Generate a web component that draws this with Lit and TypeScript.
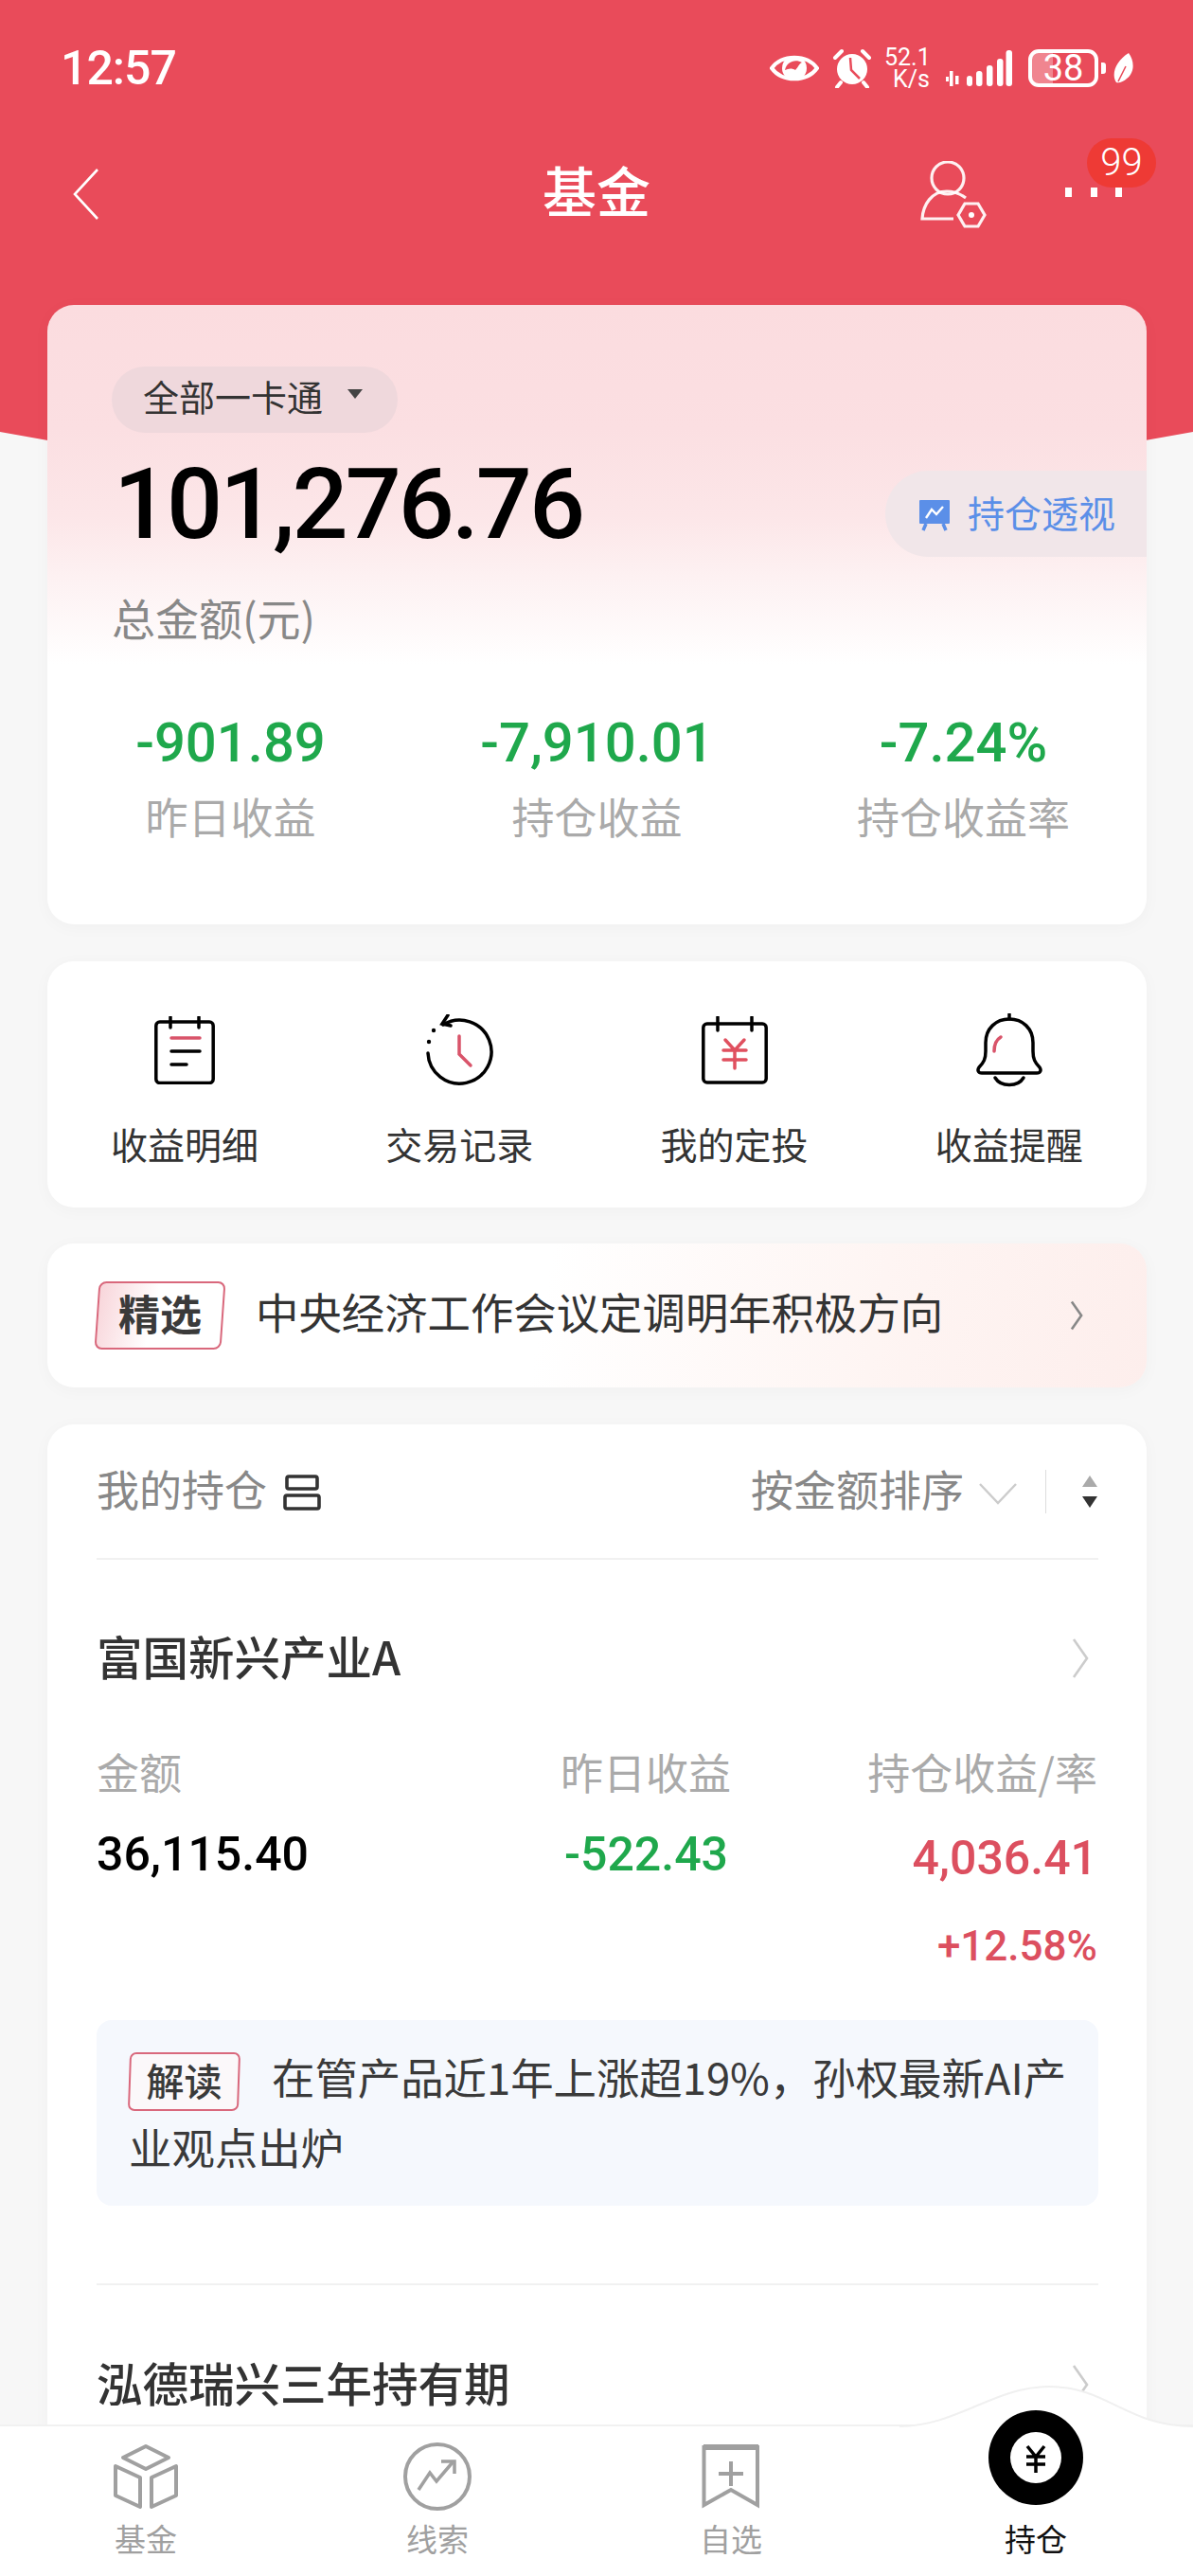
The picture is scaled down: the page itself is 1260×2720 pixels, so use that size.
import { LitElement, html, css, svg } from "lit";
import { customElement } from "lit/decorators.js";

const chevron = (cls: string) => html`<svg class=${cls} viewBox="0 0 20 44" fill="none"><path d="M3 2 L17 22 L3 42" /></svg>`;

const eye = svg`<svg width="52" height="36" viewBox="0 0 52 36" fill="none"><path d="M2 18 C13 3 39 3 50 18 C39 33 13 33 2 18Z" stroke="#fff" stroke-width="4"/><circle cx="26" cy="18" r="13" fill="#fff"/><path d="M16 20 C18 11 27 8 34 12 C31 13 30 17 27 20 C24 18 20 18 16 20Z" fill="#e94b5a"/></svg>`;
const alarm = svg`<svg width="42" height="42" viewBox="0 0 42 42" fill="none"><circle cx="21" cy="22" r="16" fill="#fff"/><path d="M3 10 L10 3 M39 10 L32 3 M9 36 L5 41 M33 36 L37 41" stroke="#fff" stroke-width="4" stroke-linecap="round"/><path d="M19 10 L20 23 L29 32" stroke="#e94b5a" stroke-width="2.5"/></svg>`;
const signal = svg`<svg width="70" height="38" viewBox="0 0 70 38" fill="#fff"><rect x="0" y="28" width="3" height="5"/><rect x="4" y="22" width="3.5" height="16"/><rect x="10" y="27" width="3.5" height="9"/><rect x="22" y="27" width="6" height="11" rx="3"/><rect x="32" y="22" width="6.5" height="16" rx="3"/><rect x="43" y="16" width="6.5" height="22" rx="3"/><rect x="54" y="9" width="6.5" height="29" rx="3"/><rect x="63.5" y="0" width="6.5" height="38" rx="3"/></svg>`;
const leaf = svg`<svg width="23" height="32" viewBox="0 0 23 32" fill="#fff"><path d="M17 0 C23 8 24 20 15 27 C12 30 7 32 4 31 C-2 22 4 8 17 0Z"/><path d="M6 30 L14 14" stroke="#e94b5a" stroke-width="1.5"/></svg>`;
const person = svg`<svg width="70" height="72" viewBox="0 0 70 72" fill="none" stroke="#fff" stroke-opacity=".92" stroke-width="3.2"><circle cx="29" cy="18" r="17"/><path d="M48 39 C41 34 34 32 28 32 C12 32 3 46 2 61 H35"/><path d="M40 57 L47 45 H61 L68 57 L61 69 H47Z"/><circle cx="54" cy="57" r="3" fill="#fff" stroke="none"/></svg>`;
const chart = svg`<svg width="36" height="34" viewBox="0 0 36 34" fill="none"><rect x="2" y="1" width="32" height="25" rx="1" fill="#5b8fe8"/><path d="M9 20 L15 11 L20 16 L27 8" stroke="#fff" stroke-width="2.4"/><path d="M9 26 L6 33 M27 26 L30 33" stroke="#5b8fe8" stroke-width="3.5"/></svg>`;

const qa1 = svg`<svg width="64" height="72" viewBox="0 0 64 72" fill="none" stroke="#000" stroke-width="3.5" stroke-linecap="round"><rect x="1.8" y="6" width="60.4" height="64.5" rx="4"/><path d="M17 1 V12 M47 1 V12"/><path d="M18 23 H48" stroke="#d9546a"/><path d="M18 37 H48 M18 51 H34"/></svg>`;
const qa2 = svg`<svg width="72" height="76" viewBox="0 0 72 76" fill="none" stroke="#000" stroke-width="3.5" stroke-linecap="round"><path d="M3 41 A33.5 33.5 0 1 0 19 11"/><path d="M24 1 L18 10 L27 12" stroke-linejoin="miter"/><circle cx="9" cy="17" r="2.2" fill="#000" stroke="none"/><circle cx="4" cy="29" r="2.2" fill="#000" stroke="none"/><path d="M36 23 V42 L48 54" stroke="#d9546a"/></svg>`;
const qa3 = svg`<svg width="70" height="72" viewBox="0 0 70 72" fill="none" stroke="#000" stroke-width="3.5" stroke-linecap="round"><rect x="1.8" y="8" width="66.4" height="62" rx="4"/><path d="M17 1 V15 M53 1 V15"/><g stroke="#e0505f"><path d="M25 25 L35 36 L45 25 M23 36 H47 M23 46 H47 M35 36 V55"/></g></svg>`;
const qa4 = svg`<svg width="70" height="78" viewBox="0 0 70 78" fill="none" stroke="#000" stroke-width="3.5" stroke-linecap="round" stroke-linejoin="round"><path d="M35 1 V6"/><path d="M6 63 C2 63 1 60 3 57 C8 52 10 48 10 40 V31 C10 16 21 6 35 6 C49 6 60 16 60 31 V40 C60 48 62 52 67 57 C69 60 68 63 64 63 Z"/><path d="M20 68 C26 78 44 78 50 68"/><path d="M26 25 C21 28 19 33 19 40" stroke="#d9546a"/></svg>`;

const tabBox = svg`<svg width="70" height="70" viewBox="0 0 70 70" fill="none" stroke="#a0a0a0" stroke-width="4" stroke-linejoin="round"><path d="M35 3 L59 15 L35 27 L11 15Z"/><path d="M3 24 V55 L29 67 V36Z"/><path d="M67 24 V55 L41 67 V36Z"/></svg>`;
const tabTrend = svg`<svg width="72" height="74" viewBox="0 0 72 74" fill="none" stroke="#a0a0a0" stroke-width="4"><circle cx="36" cy="37" r="34"/><path d="M16 51 L28 33 L35 42 L52 22" stroke-width="3.5"/><path d="M40 21 H54 V34" stroke-width="3.5"/></svg>`;
const tabMark = svg`<svg width="62" height="68" viewBox="0 0 62 68" fill="none" stroke="#a0a0a0" stroke-width="4"><path d="M2.500 3 H59 V64 L31 48 L2.500 64Z"/><path d="M2 3 H60" stroke-width="6"/><path d="M31 18 V44 M18 31 H44"/></svg>`;
const tabYen = svg`<svg width="100" height="100" viewBox="0 0 100 100" fill="none"><circle cx="50" cy="50" r="50" fill="#000"/><circle cx="50" cy="50" r="27" fill="#fff"/><path d="M41 38 L50 49 L59 38 M40 49 H60 M40 57 H60 M50 49 V66" stroke="#000" stroke-width="3.5"/></svg>`;

function chevronBack() {
  return html`<svg class="back" viewBox="0 0 27 56" fill="none"><path d="M26 2 L2 28 L26 54" /></svg>`;
}

@customElement("app-root")
export class AppRoot extends LitElement {
  static styles = css`
    :host { display: block; }
    * { box-sizing: border-box; }
    .page {
      position: relative; width: 1260px; height: 2720px; overflow: hidden; background: #f7f7f7;
      font-family: "Noto Sans CJK SC", Roboto, sans-serif; color: #333;
    }
    .num { font-family: Roboto, "Noto Sans CJK SC", sans-serif; }
    .top { position: relative; height: 322px; color: #fff; }
    .page::before {
      content: ""; position: absolute; left: 0; top: 0; width: 100%; height: 520px; background: #e94b5a;
      clip-path: circle(3400px at 50% -2885px);
    }
    .status { position: relative; height: 144px; display: flex; align-items: center; padding: 0 62px 0 64px; }
    .time { font: 500 50px/1 Roboto, sans-serif; flex: 1; letter-spacing: -1px; }
    .sicons { display: flex; align-items: center; gap: 17px; }
    .sicons > svg:first-child { margin-right: -3px; }
    .speed { width: 48px; margin-left: -4px; font: 400 25px/23px Roboto, sans-serif; text-align: right; color: #fff; }
    .battery { display: flex; align-items: center; gap: 3px; }
    .batt {
      width: 74px; height: 40px; border: 4px solid #fff; border-radius: 11px; display: flex; align-items: center; justify-content: center;
      font: 400 38px/1 Roboto, sans-serif; color: #fff; background: linear-gradient(90deg, rgba(255,255,255,.32) 33%, transparent 33%);
    }
    .nub { width: 5px; height: 12px; background: #fff; border-radius: 0 3px 3px 0; }
    .leaf { display: flex; margin-left: 4px; }
    .nav { position: relative; height: 122px; display: grid; grid-template-columns: 1fr auto 1fr; align-items: center; padding: 0 77px; }
    .back { width: 27px; height: 56px; stroke: #fff; stroke-width: 2.6; display: block; }
    .back path { vector-effect: non-scaling-stroke; }
    .title { font-size: 57px; line-height: 70px; font-weight: 500; margin-bottom: 12px; }
    .nav-r { display: flex; justify-content: flex-end; align-items: center; gap: 83px; }
    .person { display: flex; margin-top: 1px; }
    .more { position: relative; flex: none; width: 60px; height: 40px; display: flex; justify-content: space-between; align-items: flex-start; padding-top: 13px; margin-right: -2px; }
    .more i { width: 7px; height: 10px; background: #fff; }
    .badge {
      position: absolute; left: 23px; top: -39px; width: 73px; height: 52px; border-radius: 26px; background: #ee3a35;
      font: 300 40px/52px Roboto, sans-serif; color: #fff; text-align: center;
    }
    .card { position: relative; margin: 0 49px 0 50px; background: #fff; border-radius: 28px; box-shadow: 0 3px 18px rgba(0,0,0,.03); }
    .sum { height: 654px; padding-top: 65px; background: linear-gradient(180deg, #fbdcdf 0, #fbdfe2 20%, #fce6e8 34%, #fdf1f2 44%, #fff 58%); }
    .pill {
      display: inline-flex; align-items: center; margin-left: 68px; width: 302px; height: 70px; padding: 0 0 8px 33px; border-radius: 35px;
      background: #efd8dc; font-size: 38px; line-height: 60px; color: #333;
    }
    .caret { width: 0; height: 0; border: 8px solid transparent; border-top: 10px solid #444; border-bottom: 0; margin-left: 26px; margin-top: -4px; }
    .amount-row { display: flex; justify-content: space-between; align-items: flex-start; margin-top: 40px; height: 91px; }
    .amount { margin-left: 70px; font-size: 104px; line-height: 72px; font-weight: 500; color: #000; letter-spacing: -3px; }
    .insight {
      width: 276px; height: 91px; border-radius: 46px 0 0 46px; background: #f1e6e9; display: flex; align-items: center; gap: 17px; padding: 0 0 6px 34px;
      font-size: 39px; color: #5b8fe8; white-space: nowrap;
    }
    .insight svg { flex: none; margin-top: 8px; }
    .total { margin: 33px 0 0 68px; font-size: 46px; line-height: 60px; color: #888; }
    .stats { display: grid; grid-template-columns: repeat(3, 1fr); margin-top: 73px; text-align: center; }
    .stats .v { font-size: 58px; line-height: 60px; font-weight: 500; color: #1fa84c; }
    .stats .l { margin-top: 18px; font-size: 45px; line-height: 60px; color: #aaa; }
    .quick { margin-top: 39px; height: 260px; padding-top: 56px; display: grid; grid-template-columns: repeat(4, 1fr); text-align: center; }
    .qi { height: 76px; display: flex; justify-content: center; align-items: center; }
    .ql { margin-top: 35px; font-size: 39px; line-height: 50px; color: #333; }
    .news {
      margin-top: 38px; height: 152px; display: flex; align-items: center; padding: 0 66px 0 52px; font-size: 45.4px; color: #333;
      background: linear-gradient(100deg, #fff 45%, #fef5f3 75%, #fdeeec 100%);
    }
    .jx { position: relative; flex: none; width: 134px; height: 72px; margin-right: 34px; font-size: 44px; font-weight: 700; line-height: 66px; text-align: center; color: #3a3a3a; }
    .jx::before {
      content: ""; position: absolute; inset: 0; transform: skewX(-4deg); border: 2px solid #d9687c; border-radius: 8px;
      background: linear-gradient(100deg, #f8d5da, #fff 45%);
    }
    .jx span { position: relative; }
    .news .t { flex: 1; white-space: nowrap; padding-bottom: 10px; }
    .chev-s { width: 16px; height: 32px; stroke: #888; stroke-width: 2.6; }
    .chev-l { width: 24px; height: 44px; stroke: #ccc; stroke-width: 2.6; }
    .chev-s path, .chev-l path { vector-effect: non-scaling-stroke; }
    .hold { margin-top: 39px; padding: 0 51px 0 52px; height: 1300px; }
    .hold-head { height: 143px; display: flex; align-items: center; border-bottom: 2px solid #f1f1f1; font-size: 45px; color: #888; }
    .hold-head .g { flex: 1; display: flex; align-items: center; gap: 17px; }
    .hold-head .txt { line-height: 60px; margin-bottom: 6px; }
    .hold-head .g svg { margin-top: 2px; }
    .sortdown { margin: 4px 0 0 16px; }
    .vline { width: 1px; height: 46px; background: #ddd; margin: 0 38px 0 30px; }
    .arrows { display: flex; flex-direction: column; gap: 10px; margin-right: 1px; }
    .arrows i { width: 0; height: 0; border-left: 8px solid transparent; border-right: 8px solid transparent; }
    .arrows .u { border-bottom: 12px solid #aaa; }
    .arrows .d { border-top: 12px solid #333; }
    .fund { height: 70px; display: flex; justify-content: space-between; align-items: center; font-size: 48.500px; font-weight: 500; color: #333; padding-right: 7px; }
    .fund span { align-self: flex-start; line-height: 64px; }
    .f1 { margin-top: 69px; }
    .cols { display: grid; grid-template-columns: 300px 370px 387px; margin-top: 57px; }
    .cols .r { text-align: right; }
    .lab { height: 60px; font-size: 45px; line-height: 56px; color: #aaa; }
    .val { margin-top: 25px; font-size: 50px; line-height: 60px; font-weight: 500; color: #000; }
    .cols .green { color: #1fa84c; padding-right: 3px; }
    .cols .red { color: #dc4f5f; margin-top: 29px; }
    .pct { margin-top: 38px; font-size: 44px; line-height: 50px; font-weight: 500; color: #dc4f5f; }
    .read {
      margin-top: 53px; height: 196px; padding: 24px 20px 0 34px; background: #f5f8fd; border-radius: 16px; font-size: 45.4px; line-height: 70px; color: #3a3a3a;
      white-space: nowrap;
    }
    .jd {
      display: inline-block; width: 117px; height: 62px; margin-right: 34px; vertical-align: middle; position: relative; top: -2px;
      font-size: 40px; line-height: 58px; font-weight: 500; text-align: center;
    }
    .jd::before { content: ""; position: absolute; inset: 0; transform: skewX(-2deg); border: 2px solid #d9687c; border-radius: 7px; background: #fbf8fa; }
    .jd span { position: relative; }
    .sep { height: 2px; background: #f1f1f1; margin-top: 82px; }
    .f2 { margin-top: 70px; }
    .tabbar {
      position: absolute; left: 0; bottom: 0; width: 1260px; height: 160px; background: #fff; border-top: 2px solid #f1f1f1;
      display: grid; grid-template-columns: 308px 308px 312px 332px; text-align: center; padding-top: 18px;
    }
    .bump { position: absolute; left: 900px; top: -44px; }
    .tab { position: relative; display: flex; flex-direction: column; align-items: center; }
    .ti { height: 70px; display: flex; align-items: center; }
    .tab .tl { height: 40px; margin-top: 13px; font-size: 33px; line-height: 34px; color: #a0a0a0; }
    .tab.on .ti { height: 100px; margin: -35px 0 18px; }
    .tab.on .tl { margin-top: 0; color: #111; }
  `;

  render() {
    const quick: [unknown, string][] = [[qa1, "收益明细"], [qa2, "交易记录"], [qa3, "我的定投"], [qa4, "收益提醒"]];
    const stats = [["-901.89", "昨日收益"], ["-7,910.01", "持仓收益"], ["-7.24%", "持仓收益率"]];
    const tabs: [unknown, string][] = [[tabBox, "基金"], [tabTrend, "线索"], [tabMark, "自选"]];
    return html`
      <div class="page">
        <header class="top">
          <div class="status">
            <div class="time">12:57</div>
            <div class="sicons">
              ${eye}${alarm}
              <div class="speed">52.1<br />K/s</div>
              ${signal}
              <div class="battery"><div class="batt">38</div><div class="nub"></div><div class="leaf">${leaf}</div></div>
            </div>
          </div>
          <div class="nav">
            ${chevronBack()}
            <div class="title">基金</div>
            <div class="nav-r">
              <div class="person">${person}</div>
              <div class="more"><i></i><i></i><i></i><div class="badge">99</div></div>
            </div>
          </div>
        </header>

        <section class="card sum">
          <div class="pill">全部一卡通<span class="caret"></span></div>
          <div class="amount-row">
            <div class="amount num">101,276.76</div>
            <div class="insight">${chart}持仓透视</div>
          </div>
          <div class="total">总金额(元)</div>
          <div class="stats">
            ${stats.map(([v, l]) => html`<div><div class="v num">${v}</div><div class="l">${l}</div></div>`)}
          </div>
        </section>

        <section class="card quick">
          ${quick.map(([i, l]) => html`<div><div class="qi">${i}</div><div class="ql">${l}</div></div>`)}
        </section>

        <section class="card news">
          <div class="jx"><span>精选</span></div>
          <div class="t">中央经济工作会议定调明年积极方向</div>
          ${chevron("chev-s")}
        </section>

        <section class="card hold">
          <div class="hold-head">
            <div class="g"><span class="txt">我的持仓</span>
              <svg width="40" height="38" viewBox="0 0 40 38" fill="none" stroke="#333" stroke-width="3.6"><rect x="4" y="2" width="32" height="13" rx="2"/><rect x="2" y="22" width="36" height="14" rx="2"/></svg>
            </div>
            <span class="txt">按金额排序</span>
            <svg class="sortdown" width="40" height="24" viewBox="0 0 40 24" fill="none" stroke="#ccc" stroke-width="2.4"><path d="M1 2 L20 22 L39 2"/></svg>
            <div class="vline"></div>
            <div class="arrows"><i class="u"></i><i class="d"></i></div>
          </div>

          <div class="fund f1"><span>富国新兴产业A</span>${chevron("chev-l")}</div>
          <div class="cols">
            <div><div class="lab">金额</div><div class="val num">36,115.40</div></div>
            <div class="r"><div class="lab">昨日收益</div><div class="val num green">-522.43</div></div>
            <div class="r">
              <div class="lab">持仓收益/率</div>
              <div class="val num red">4,036.41</div>
              <div class="pct num">+12.58%</div>
            </div>
          </div>
          <div class="read"><span class="jd"><span>解读</span></span>在管产品近1年上涨超19%，孙权最新AI产<br />业观点出炉</div>
          <div class="sep"></div>
          <div class="fund f2"><span>泓德瑞兴三年持有期</span>${chevron("chev-l")}</div>
        </section>

        <nav class="tabbar">
          <svg class="bump" width="360" height="46" viewBox="0 0 360 46" fill="#fff"><path d="M0 44 H50 C110 44 150 2 208 2 C270 2 290 44 360 44 V46 H0Z" stroke="none"/><path d="M50 44 C110 44 150 2 208 2 C270 2 290 44 360 44" fill="none" stroke="#f0f0f0" stroke-width="2"/></svg>
          ${tabs.map(([i, l]) => html`<div class="tab"><div class="ti">${i}</div><div class="tl">${l}</div></div>`)}
          <div class="tab on"><div class="ti">${tabYen}</div><div class="tl">持仓</div></div>
        </nav>
      </div>
    `;
  }
}
